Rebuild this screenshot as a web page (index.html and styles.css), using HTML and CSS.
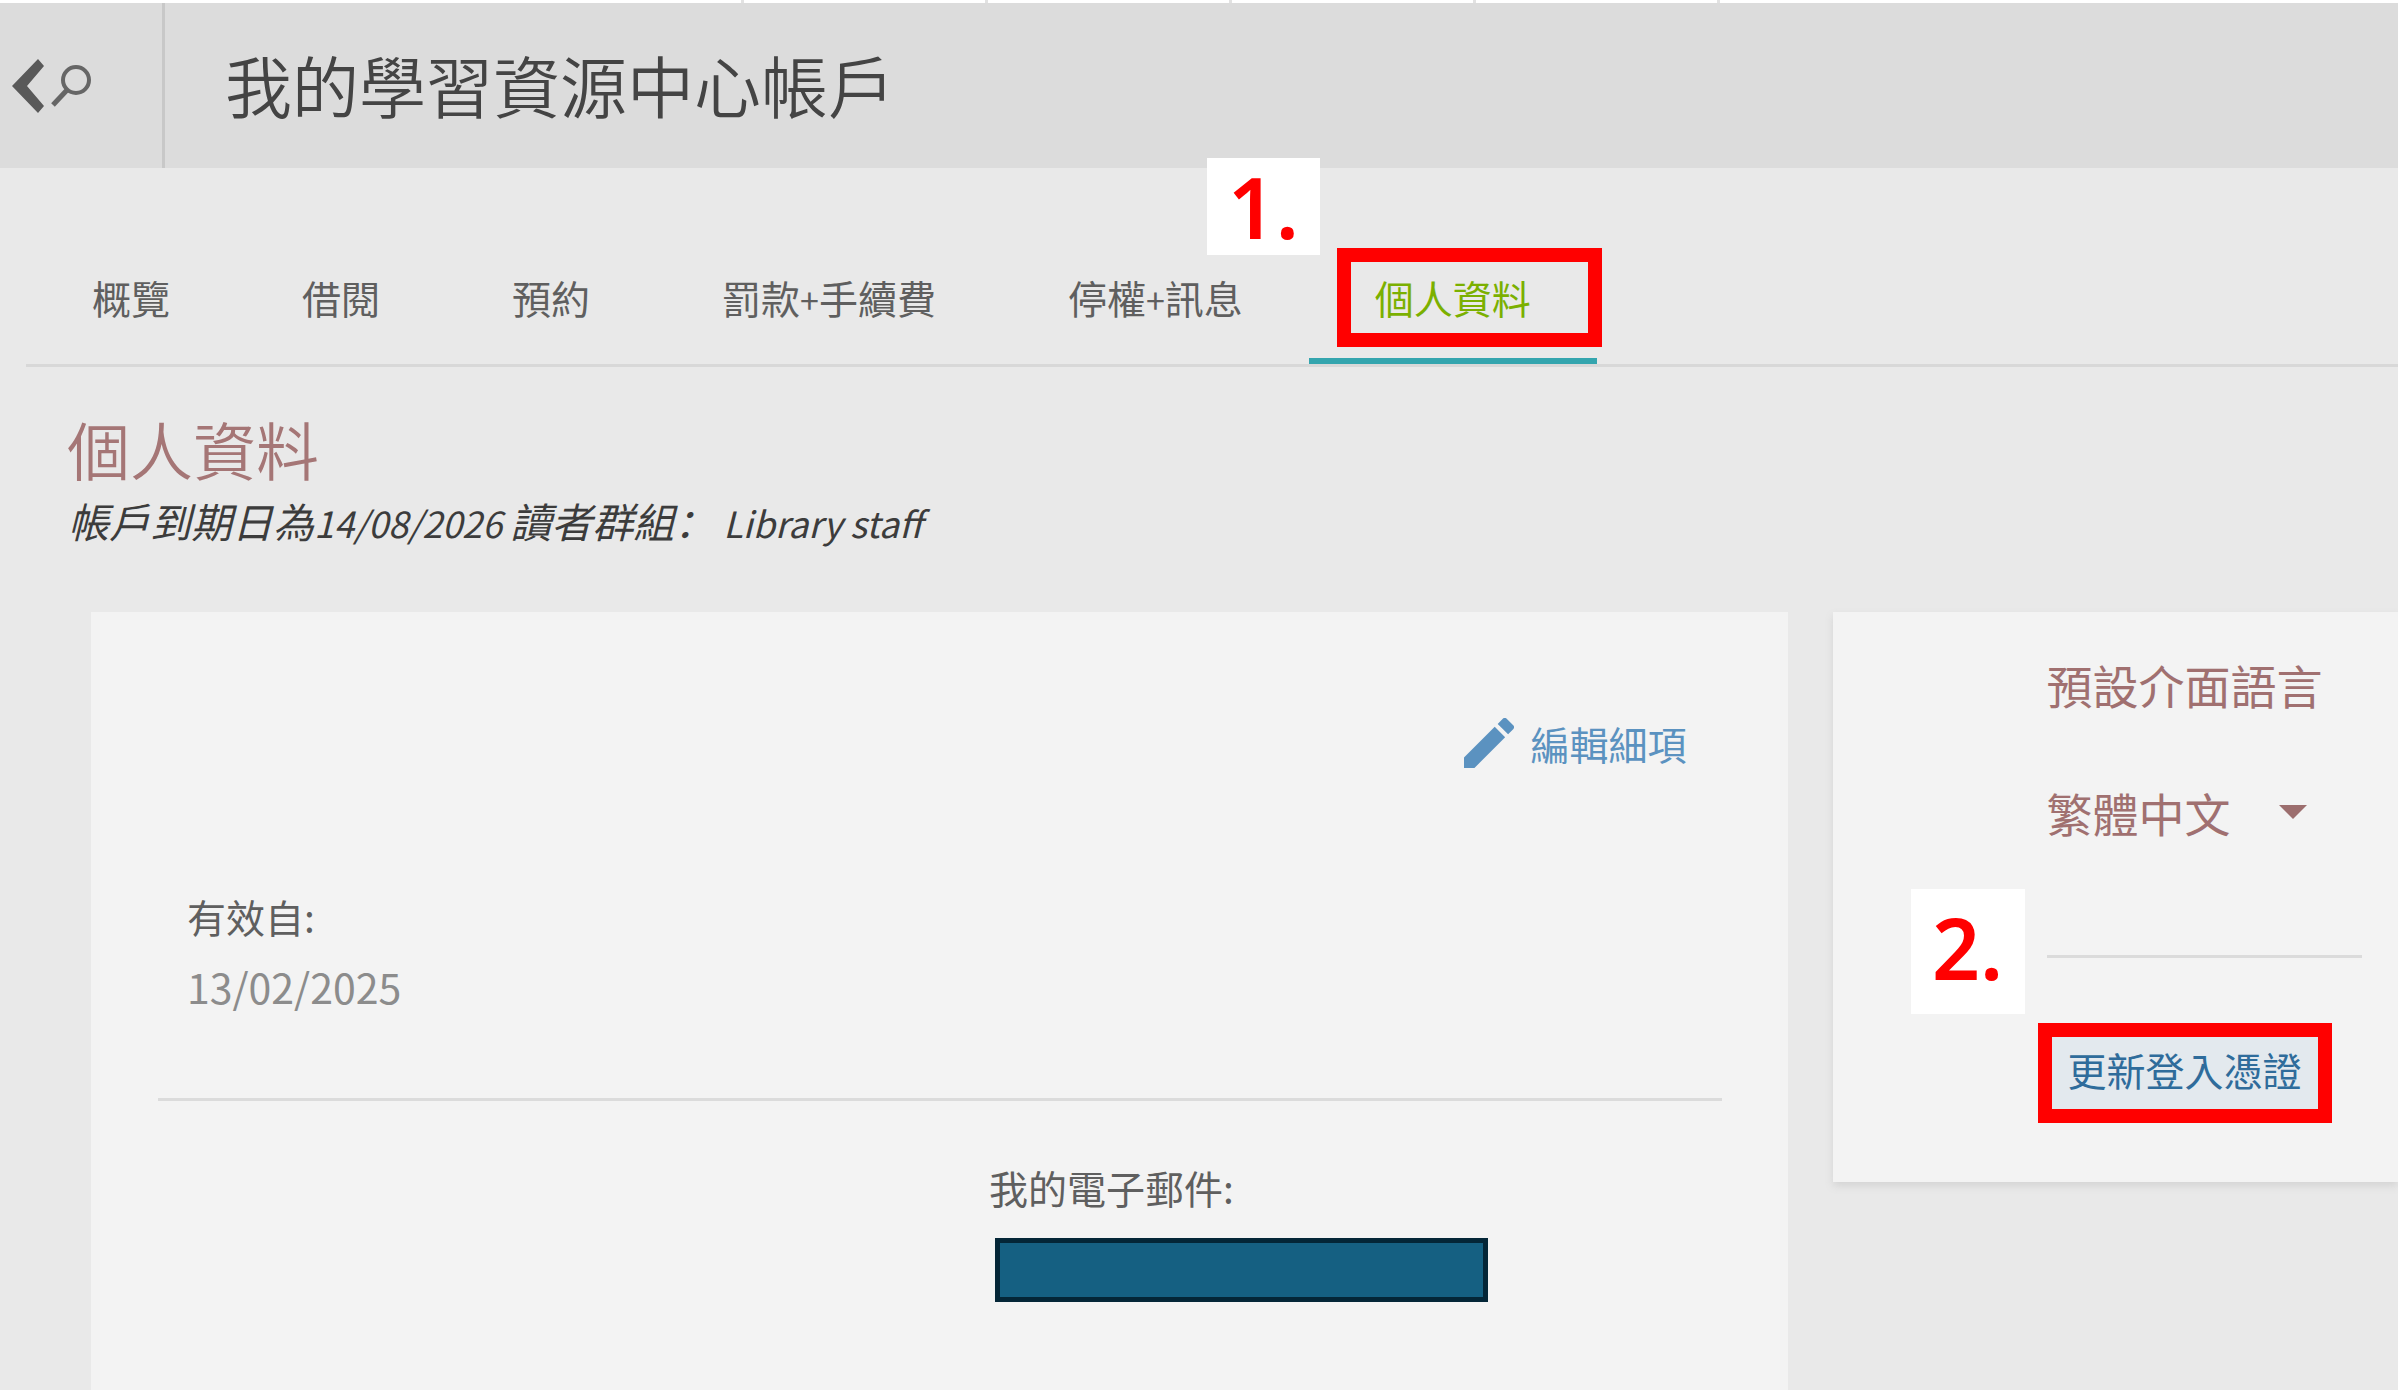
FILE: index.html
```html
<!DOCTYPE html>
<html lang="zh-Hant">
<head>
<meta charset="utf-8">
<title>我的學習資源中心帳戶</title>
<link rel="stylesheet" href="styles.css">
</head>
<body>
<div class="strip"><i></i><i></i><i></i><i></i><i></i></div>
<header class="header">
  <a class="back" href="#" aria-label="返回搜尋">
    <svg width="84" height="56" viewBox="0 0 84 56" aria-hidden="true">
      <path d="M27 1 L33 8 L16 28 L33 48 L27 55 L1 28Z" fill="#595959"/>
      <circle cx="65" cy="22" r="13" fill="none" stroke="#666" stroke-width="4"/>
      <path d="M56 32 L42 47" stroke="#666" stroke-width="5"/>
    </svg>
  </a>
  <h1 class="title">我的學習資源中心帳戶</h1>
</header>
<nav class="tabs">
  <a class="tab" href="#">概覽</a>
  <a class="tab" href="#">借閱</a>
  <a class="tab" href="#">預約</a>
  <a class="tab" href="#">罰款<span class="plus">+</span>手續費</a>
  <a class="tab" href="#">停權<span class="plus">+</span>訊息</a>
  <a class="tab active" href="#">個人資料<span class="step step-one">1.</span></a>
</nav>
<main>
  <h2 class="heading">個人資料</h2>
  <p class="meta">帳戶到期日為<span class="latin">14/08/2026 </span>讀者群組<span class="colon" lang="zh-Hans">：</span><span class="latin"> Library staff</span></p>
  <div class="cards">
    <section class="card details">
      <a class="edit" href="#">
        <svg width="50" height="50" viewBox="3 3 18 18" aria-hidden="true"><path fill="#5b92c0" d="M3 17.25V21h3.75L17.81 9.94l-3.75-3.75L3 17.25zM20.71 7.04a1 1 0 0 0 0-1.41l-2.34-2.34a1 1 0 0 0-1.41 0l-1.83 1.83 3.75 3.75 1.83-1.83z"/></svg>
        編輯細項
      </a>
      <dl class="field">
        <dt>有效自:</dt>
        <dd class="date">13/02/2025</dd>
      </dl>
      <hr class="rule">
      <dl class="field email">
        <dt>我的電子郵件:</dt>
        <dd class="redacted"></dd>
      </dl>
    </section>
    <section class="card settings">
      <label class="label" for="lang">預設介面語言</label>
      <div class="picker">
        <select id="lang"><option>繁體中文</option></select>
        <svg width="28" height="14" viewBox="0 0 28 14" aria-hidden="true"><path d="M0 0H28L14 14Z" fill="#9c6e6e"/></svg>
      </div>
      <hr class="rule">
      <a class="update" href="#">更新登入憑證<span class="step step-two">2.</span></a>
    </section>
  </div>
</main>
</body>
</html>
```
FILE: styles.css
```css
*, *::before, *::after { box-sizing: border-box; }
body {
  margin: 0;
  background: #e9e9e9;
  color: #5f5f5f;
  font-family: "Noto Sans CJK TC", sans-serif;
  font-size: 39px;
  line-height: 60px;
  overflow-x: hidden;
}
a { color: inherit; text-decoration: none; }
h1, h2, p, dl, dd, hr { margin: 0; }

.strip {
  display: flex;
  gap: 241px;
  height: 3px;
  padding-left: 741px;
  background: #fff;
}
.strip i { width: 3px; background: #e2e2e2; }

.header {
  display: flex;
  height: 165px;
  background: #dcdcdc;
}
.back {
  display: flex;
  align-items: center;
  width: 165px;
  padding-left: 11px;
  border-right: 3px solid #c8c8c8;
}
.title {
  padding-left: 60px;
  color: #444;
  font-size: 67px;
  font-weight: 350;
  line-height: 162px;
}

.tabs {
  display: flex;
  margin-left: 26px;
  padding-top: 99px;
  border-bottom: 3px solid #d8d8d8;
}
.tab {
  position: relative;
  padding: 0 66px 31px;
  border-bottom: 6px solid transparent;
  white-space: nowrap;
}
.plus { font-size: 34px; line-height: 1; }
.active { border-color: #34a5ae; color: #7bb000; }
.active::after {
  content: "";
  position: absolute;
  left: 28px;
  top: -19px;
  width: 265px;
  height: 99px;
  border: 14px solid #f00;
}
.step {
  position: absolute;
  background: #fff;
  color: #f00;
  font-family: "Noto Sans", "Open Sans", sans-serif;
  font-size: 84px;
  font-weight: 600;
  text-align: center;
}
.step-one {
  left: -102px;
  top: -109px;
  width: 113px;
  height: 97px;
  line-height: 97px;
}
.step-two {
  left: -141px;
  top: -148px;
  width: 114px;
  height: 125px;
  line-height: 117px;
}

.heading {
  margin: 40px 0 0 67px;
  color: #a57676;
  font-size: 63px;
  font-weight: 350;
  line-height: 82px;
}
.meta {
  height: 62px;
  margin-left: 68px;
  color: #3c3c3c;
  font-size: 41px;
  font-style: italic;
  line-height: 62px;
  white-space: pre-wrap;
}
.latin { font-size: 36px; line-height: 1; }
.colon { font-family: "Noto Sans CJK SC", sans-serif; }

.cards {
  display: grid;
  grid-template-columns: 3fr 1fr;
  align-items: start;
  gap: 45px;
  margin-top: 61px;
  padding-left: 91px;
}
.card {
  background: #f3f3f3;
  box-shadow: 0 4px 8px #d4d4d4;
}
.details {
  padding: 101px 66px 89px 67px;
  box-shadow: none;
}
.edit {
  display: flex;
  justify-content: flex-end;
  align-items: center;
  gap: 16px;
  padding-right: 35px;
  color: #5b92c0;
}
.field { margin: 113px 0 82px 29px; }
.date { margin-top: 10px; color: #8c8c8c; font-size: 41px; }
.rule { height: 3px; border: 0; background: #dbdbdb; }
.email { margin: 56px 0 0 831px; }
.redacted {
  width: 493px;
  height: 64px;
  margin: 21px 0 0 6px;
  border: 5px solid #042637;
  background: #156082;
}

.settings {
  padding: 42px 36px 73px 214px;
  color: #a07070;
  font-size: 46px;
}
.label { display: block; white-space: nowrap; }
.picker {
  display: flex;
  align-items: center;
  gap: 48px;
  margin: 68px 0 113px;
}
.picker select {
  appearance: none;
  padding: 0;
  border: 0;
  background: none;
  color: inherit;
  font: inherit;
}
.update {
  position: relative;
  display: block;
  width: max-content;
  margin: 79px 0 0 5px;
  padding: 0 16px 8px;
  background: #e3e9ee;
  color: #2f6c9b;
  font-size: 39px;
  line-height: 64px;
}
.update::after {
  content: "";
  position: absolute;
  inset: -14px;
  border: 14px solid #f00;
}
```
